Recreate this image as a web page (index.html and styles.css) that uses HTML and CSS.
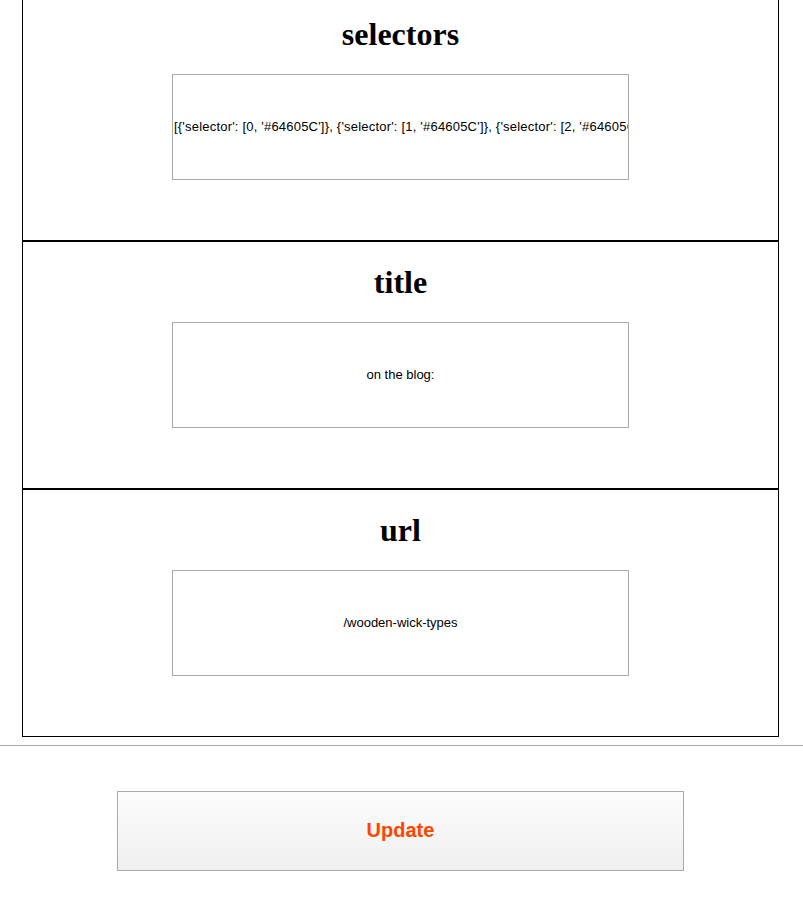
FILE: index.html
```html
<!DOCTYPE html>
<html>
<head>
<meta charset="utf-8">
<link rel="stylesheet" href="styles.css">
</head>
<body>
<div class="panel">
  <section class="item">
    <h1 class="item-title">selectors</h1>
    <div class="field field-long">[{'selector': [0, '#64605C']}, {'selector': [1, '#64605C']}, {'selector': [2, '#64605C']}, {'selector': [3, '#64605C']}]</div>
  </section>
  <section class="item">
    <h1 class="item-title">title</h1>
    <div class="field">on the blog:</div>
  </section>
  <section class="item">
    <h1 class="item-title">url</h1>
    <div class="field">/wooden-wick-types</div>
  </section>
</div>
<hr class="divider">
<div class="actions">
  <button class="update-btn" type="button">Update</button>
</div>
</body>
</html>
```
FILE: styles.css
```css
html, body {
  margin: 0;
  padding: 0;
  background: #fff;
}
body {
  font-family: "Liberation Sans", Arial, sans-serif;
  color: #000;
}
.panel {
  margin: -7px 0 0 22px;
  width: 757px;
}
.item {
  box-sizing: border-box;
  height: 248px;
  border: 1px solid #000;
  display: flex;
  flex-direction: column;
  align-items: center;
}
.item-title {
  font-family: "Liberation Serif", "Times New Roman", serif;
  font-weight: bold;
  font-size: 32px;
  line-height: 36px;
  margin: 22px 0 0;
  text-align: center;
}
.field {
  box-sizing: border-box;
  margin-top: 22px;
  width: 457px;
  height: 106px;
  border: 1px solid #aaa;
  padding: 0 1px;
  font-size: 13px;
  line-height: 104px;
  text-align: center;
  white-space: nowrap;
  overflow: hidden;
}
.field-long {
  letter-spacing: 0.2px;
}
.divider {
  margin: 8px 0 0;
  border: 0;
  border-top: 1px solid #aaa;
  height: 0;
}
.actions {
  margin: 45px 0 0 22px;
  width: 757px;
  display: flex;
  justify-content: center;
}
.update-btn {
  box-sizing: border-box;
  width: 567px;
  height: 80px;
  border: 1px solid #aaa;
  border-radius: 0;
  background: linear-gradient(#fdfdfd, #efefef);
  color: #ff4500;
  font-family: "Liberation Sans", Arial, sans-serif;
  font-weight: bold;
  font-size: 20px;
  padding: 0 0 2px;
  cursor: pointer;
}
```
